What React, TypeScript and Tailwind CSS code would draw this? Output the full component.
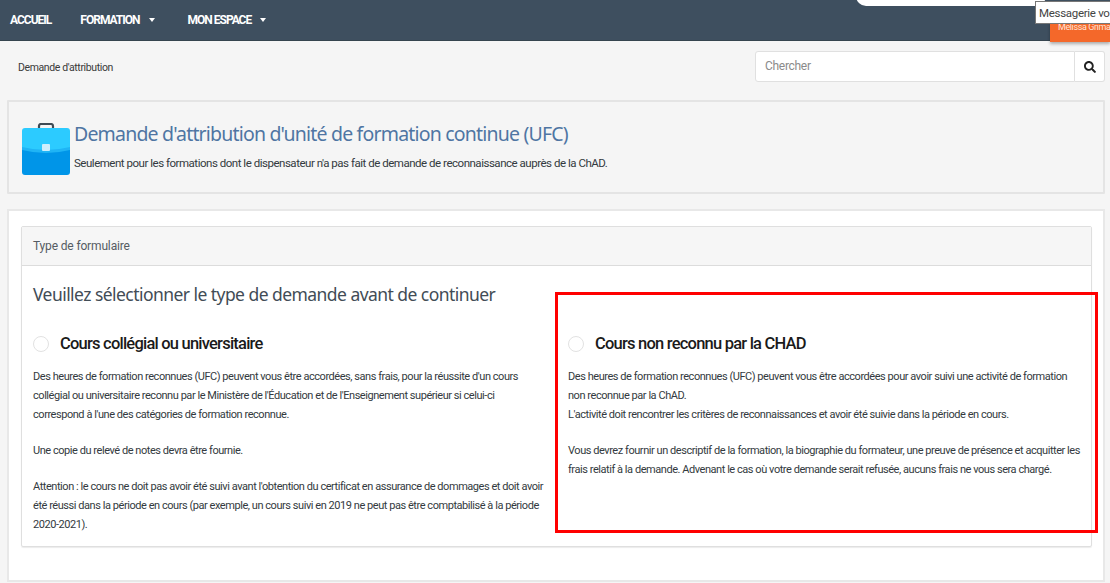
import { FaSearch } from "react-icons/fa";

function Caret() {
  return <span className="ml-[9px] inline-block h-0 w-0 border-x-[3.5px] border-t-[4px] border-x-transparent border-t-white" />;
}

function Briefcase() {
  return (
    <svg viewBox="0 0 48 52" className="mt-[6px] h-[52px] w-[48px] shrink-0">
      <path d="M17 6V3a2 2 0 0 1 2-2h10a2 2 0 0 1 2 2v3" fill="none" stroke="#3f4a54" strokeWidth="2.2" />
      <path d="M3 5h42a3 3 0 0 1 3 3v21H0V8a3 3 0 0 1 3-3z" fill="#2ccbff" />
      <path d="M0 26q24 6 48 0v23a3 3 0 0 1-3 3H3a3 3 0 0 1-3-3z" fill="#0095e8" />
      <path d="M0 24q24 6 48 0v3q-24 6-48 0z" fill="#1fb4f5" />
      <rect x="20" y="21" width="8" height="7" rx="1" fill="#cdeefc" />
    </svg>
  );
}

function Option({ title, children, className }: { title: string; children: React.ReactNode; className: string }) {
  return (
    <div className={className}>
      <div className="flex h-[28px] items-center">
        <span className="h-[16px] w-[16px] rounded-full border border-[#e2e2e2] bg-white" />
        <span className="ml-[11px] text-[16.5px] font-medium tracking-[-0.78px] text-[#1a1a1a]">{title}</span>
      </div>
      <div className="mt-[9px] text-[11px] leading-[19px] tracking-[-0.45px] text-[#333a40]">{children}</div>
    </div>
  );
}

export default function App() {
  return (
    <div className="relative h-[583px] w-[1110px] overflow-hidden bg-[#f5f5f5] font-['Roboto',sans-serif]">
      <header className="relative flex h-[41px] items-center border-b border-[#36454f] bg-[#3e4f5f] pl-[10px] text-[12px] font-bold tracking-[-1px] text-white">
        <span>ACCUEIL</span>
        <span className="ml-[29px] flex items-center">FORMATION<Caret /></span>
        <span className="ml-[33px] flex items-center">MON ESPACE<Caret /></span>
        <div className="absolute -top-[10px] left-[856px] h-[16px] w-[190px] rounded-b-[10px] bg-white" />
        <div className="absolute right-0 top-[22px] h-[20px] w-[60px] whitespace-nowrap bg-[#f4682a] pl-[8px] text-[9px] font-normal leading-[10px] tracking-[-0.4px] text-[#ffe3d6] shadow-[0_2px_3px_rgba(0,0,0,0.3)]">
          Melissa Grima
        </div>
        <div className="absolute left-[1035px] top-[1px] h-[23px] w-[75px] whitespace-nowrap border border-[#777] border-r-0 bg-white pl-[3px] text-[11.5px] font-normal leading-[22px] tracking-[-0.3px] text-[#444]">
          Messagerie vo
        </div>
      </header>

      <div className="flex h-[59px] items-start pl-[18px] pr-[5px] pt-[10px]">
        <span className="text-[10.5px] leading-[34px] tracking-[-0.38px] text-[#3a3a3a]">Demande d'attribution</span>
        <div className="ml-auto flex h-[31px]">
          <div className="flex w-[320px] items-center rounded-l-[3px] border border-[#e0e0e0] bg-white pb-[2px] pl-[9px] text-[12px] tracking-[-0.3px] text-[#8a8a8a]">Chercher</div>
          <div className="flex w-[30px] items-center justify-center rounded-r-[3px] border border-l-0 border-[#e0e0e0] bg-white">
            <FaSearch size={12} className="text-[#222]" />
          </div>
        </div>
      </div>

      <section className="ml-[7px] flex h-[94px] w-[1098px] items-center rounded-[1px] border-2 border-[#e4e4e4] pb-[2px] pl-[13px]">
        <Briefcase />
        <div className="ml-[4px]">
          <h1 className="font-['Noto_Sans',sans-serif] text-[19.5px] leading-[28px] tracking-[-0.81px] text-[#4f75a3]">
            Demande d'attribution d'unité de formation continue (UFC)
          </h1>
          <p className="mt-[7px] text-[11.5px] leading-[17px] tracking-[-0.48px] text-[#333a40]">
            Seulement pour les formations dont le dispensateur n'a pas fait de demande de reconnaissance auprès de la ChAD.
          </p>
        </div>
      </section>

      <section className="ml-[7px] mt-[15px] h-[373px] w-[1098px] border-2 border-[#e8e8e8] bg-white pl-[12px] pr-[11px] pt-[15px]">
        <div className="h-[321px] rounded-[2px] border border-[#dfdfdf] shadow-[0_1px_1px_rgba(0,0,0,0.08)]">
          <div className="flex h-[39px] items-center border-b border-[#dcdcdc] bg-[#f6f6f6] pl-[11px] text-[12px] tracking-[-0.15px] text-[#555c63]">Type de formulaire</div>
          <h2 className="pl-[11px] pt-[16px] font-['Noto_Sans',sans-serif] text-[17.5px] leading-[25px] tracking-[-0.55px] text-[#424c56]">
            Veuillez sélectionner le type de demande avant de continuer
          </h2>
          <div className="flex pt-[23px]">
            <Option title="Cours collégial ou universitaire" className="w-[534px] pl-[11px] pr-[10px]">
              <p>Des heures de formation reconnues (UFC) peuvent vous être accordées, sans frais, pour la réussite d'un cours collégial ou universitaire reconnu par le Ministère de l'Éducation et de l'Enseignement supérieur si celui-ci correspond à l'une des catégories de formation reconnue.</p>
              <p className="mt-[17px]">Une copie du relevé de notes devra être fournie.</p>
              <p className="mt-[17px]">Attention : le cours ne doit pas avoir été suivi avant l'obtention du certificat en assurance de dommages et doit avoir été réussi dans la période en cours (par exemple, un cours suivi en 2019 ne peut pas être comptabilisé à la période 2020-2021).</p>
            </Option>
            <Option title="Cours non reconnu par la CHAD" className="w-[526px] pl-[12px]">
              <p>Des heures de formation reconnues (UFC) peuvent vous être accordées pour avoir suivi une activité de formation non reconnue par la ChAD.<br />L'activité doit rencontrer les critères de reconnaissances et avoir été suivie dans la période en cours.</p>
              <p className="mt-[17px]">Vous devrez fournir un descriptif de la formation, la biographie du formateur, une preuve de présence et acquitter les frais relatif à la demande. Advenant le cas où votre demande serait refusée, aucuns frais ne vous sera chargé.</p>
            </Option>
          </div>
        </div>
      </section>

      {/* annotation drawn over the screenshot */}
      <div className="absolute left-[555px] top-[292px] h-[241px] w-[543px] border-[3px] border-[#ff0000]" />
    </div>
  );
}
